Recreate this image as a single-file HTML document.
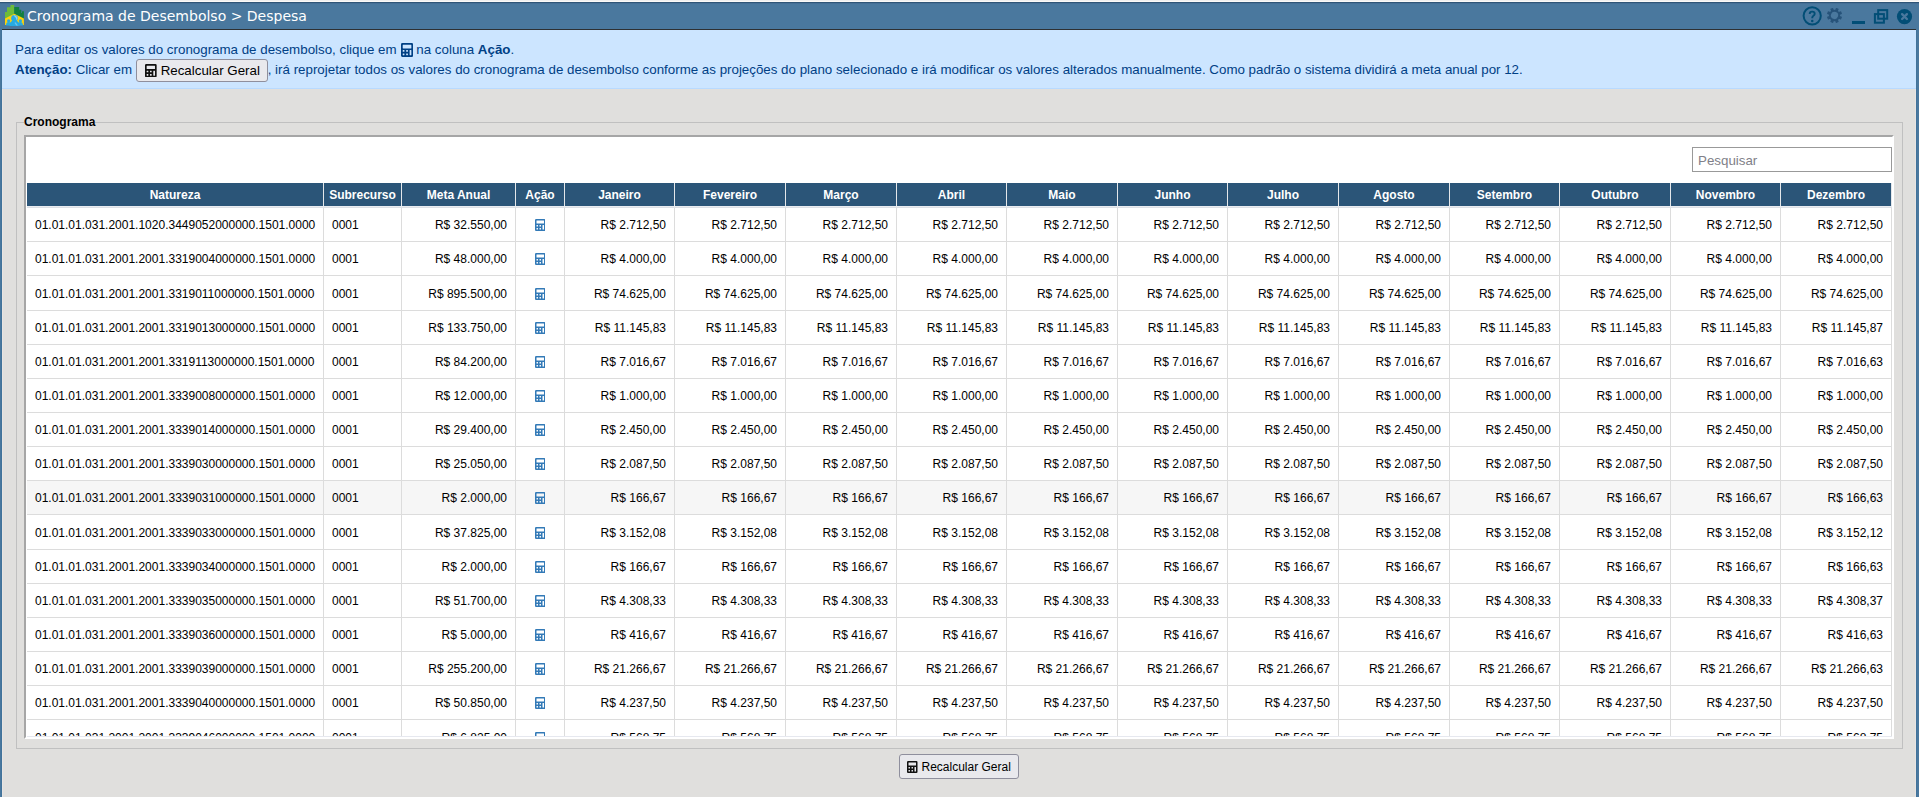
<!DOCTYPE html>
<html lang="pt-BR">
<head>
<meta charset="utf-8">
<title>Cronograma de Desembolso &gt; Despesa</title>
<style>
html,body{margin:0;padding:0;}
body{width:1919px;height:797px;overflow:hidden;position:relative;background:#e0dfdd;font-family:"Liberation Sans",Arial,sans-serif;font-size:12px;color:#000;}
#topstrip{position:absolute;left:0;top:0;width:1919px;height:2px;background:#efefef;border-bottom:1px solid #fbf9f7;box-sizing:border-box;}
#titlebar{position:absolute;left:0;top:2px;width:1919px;height:28px;background:#4a789e;box-sizing:border-box;border-top:1px solid #2f5577;box-shadow:inset 0 1px 0 #456f96;}
#titleline{position:absolute;left:2px;top:29px;width:1914px;height:1px;background:#2e3032;}
#bl{position:absolute;left:0;top:30px;width:2px;height:767px;background:linear-gradient(90deg,#4a789e 50%,#41739b 50%);}
#br{position:absolute;left:1916px;top:30px;width:3px;height:767px;background:linear-gradient(90deg,#41739b 33.3%,#4a789e 33.3%);}
#bl2{position:absolute;left:2px;top:89px;width:1px;height:708px;background:#e8e4e2;}
#br2{position:absolute;left:1915px;top:89px;width:1px;height:708px;background:#e8e4e2;}
#title{position:absolute;left:27px;top:6px;font-family:"DejaVu Sans",Verdana,sans-serif;font-size:14px;color:#fff;white-space:nowrap;line-height:20px;}
#logo{position:absolute;left:4px;top:4px;width:21px;height:23px;}
.tbi{position:absolute;}
#info{position:absolute;left:2px;top:30px;width:1914px;height:59px;box-sizing:border-box;background:#cce5ff;border:1px solid #b8daff;border-left:0;border-right:0;border-top-color:#cce5ff;color:#004085;font-size:13.333px;}
#info .l1{position:absolute;left:13px;top:10px;white-space:nowrap;line-height:18px;}
#info .l2{position:absolute;left:13px;top:30px;white-space:nowrap;line-height:18px;}
.ci2{width:12.1px;height:14px;vertical-align:-2.5px;margin:0 0 0 0.3px;}
.btn{display:inline-block;box-sizing:border-box;background:#e9e9ed;border:1px solid #8f8f9d;border-radius:3px;color:#000;font-size:13.333px;font-family:"Liberation Sans",Arial,sans-serif;white-space:nowrap;}
.ci3{width:11.67px;height:13.33px;vertical-align:-2px;margin-right:3px;}
#ibtn{position:absolute;left:134px;top:28px;width:132px;height:23px;line-height:21px;padding-left:8px;}
#ibtn .ci3{margin-right:4px;}
#fs{position:absolute;left:16px;top:122px;width:1887px;height:627px;box-sizing:border-box;border:1px solid #c0c0c0;}
#legend{position:absolute;left:24px;top:115px;font-weight:bold;font-size:12px;line-height:14px;background:#e0dfdd;white-space:nowrap;}
#box{position:absolute;left:24px;top:135px;width:1870px;height:604px;box-sizing:border-box;background:#fff;border-style:solid;border-width:2px;border-color:#a6a6a6 #fff #fff #a6a6a6;overflow:hidden;}
#search{position:absolute;left:1692px;top:147px;width:200px;height:25px;box-sizing:border-box;border:1px solid #999;background:#fff;font-size:13.333px;color:#808088;line-height:23px;padding-left:5px;padding-top:1px;}
#grid{position:absolute;left:27px;top:183px;width:1865px;height:553px;overflow:hidden;}
.hr{position:absolute;left:0;top:0;width:1865px;height:23px;background:#2b5578;color:#fff;font-weight:bold;display:flex;}
.hr .c{box-sizing:border-box;height:23px;line-height:23px;padding-top:1px;text-align:center;border-right:1px solid #e4e7ea;white-space:nowrap;overflow:hidden;}
#hline{position:absolute;left:0;top:23px;width:1865px;height:1px;background:#e9ecf1;border-bottom:1px solid #dde0e5;z-index:2;}
.r{position:absolute;left:0;width:1865px;display:flex;box-sizing:border-box;border-bottom:1px solid #dcdcdc;background:#fff;}
.r.hov{background:#f6f6f6;}
.r .c{box-sizing:border-box;height:100%;border-right:1px solid #dcdcdc;white-space:nowrap;overflow:hidden;display:flex;align-items:center;padding:1px 8px 0 8px;}
.c1{width:297px;}
.c2{width:78px;}
.c3{width:114px;}
.c4{width:49px;}
.r .c3,.r .cm{justify-content:flex-end;}
.r .c4{justify-content:center;padding:0;}
.cm{width:111px;}
.cm:nth-child(5),.cm:nth-child(8),.cm:nth-child(10),.cm:nth-child(13),.cm:nth-child(15){width:110px;}
.ci{width:10.5px;height:12px;display:block;margin-top:1px;}
#bbtn{position:absolute;left:899px;top:754px;width:120px;height:25px;line-height:23px;padding-left:7.4px;padding-top:1px;font-size:12px;}
#bbtn .ci3{width:10.5px;height:12px;vertical-align:-2px;margin-right:3.6px;}
#gline{position:absolute;left:27px;top:736px;width:1865px;height:1px;background:#e6e8ef;}
</style>
</head>
<body>
<div id="topstrip"></div>
<div id="titlebar"></div>
<div id="bl"></div><div id="br"></div><div id="bl2"></div><div id="br2"></div>
<div id="titleline"></div>
<svg id="logo" viewBox="0 0 21 23">
<polygon fill="#6dbb3a" points="1,8 3,8 3,3.200 6.500,3.200 6.500,1 10.200,1 10.200,11 1,15.500" />
<polygon fill="#128040" points="10.200,3 15.200,3 15.200,5.800 17.300,5.800 17.300,9 18,9 18,7.200 19.900,7.200 19.900,15.500 10.200,11" />
<polygon fill="#fdd20a" points="1,14.600 10.300,9.800 19.900,14.600 19.900,21 1,21" />
<circle cx="10.500" cy="14.200" r="3.300" fill="#27aae1"/>
<path fill="#27aae1" d="M5.500 22c0-4 2-5.500 5-5.500s5 1.500 5 5.500z"/>
<circle cx="4.600" cy="16.800" r="1.600" fill="#27aae1"/><path fill="#27aae1" d="M2 21.500c0-2.500 1-3.500 2.600-3.500s2.600 1 2.600 3.500z"/>
<circle cx="16.400" cy="16.800" r="1.600" fill="#27aae1"/><path fill="#27aae1" d="M13.800 21.500c0-2.500 1-3.500 2.600-3.500s2.600 1 2.600 3.500z"/>
<path fill="#8fd3f2" d="M10.200 11.200c2 0.200 3.500 1.600 3.300 3.800l-1 1.300c-0.200-2.200-1.300-3.800-3-4.600z"/>
<path fill="#6cc5ee" d="M11.500 18.200l2.500 3.300h-1.800l-1.700-2.800z"/>
</svg>
<div id="title">Cronograma de Desembolso &gt; Despesa</div>

<!-- window icons -->
<svg class="tbi" style="left:1802px;top:6px;width:21px;height:21px" viewBox="0 0 21 21">
<circle cx="10.200" cy="9.850" r="8.600" fill="none" stroke="#024e76" stroke-width="2"/>
<path d="M7.700 7.900c0-1.500 1.100-2.300 2.500-2.300 1.500 0 2.500 0.800 2.500 2.100 0 1-0.500 1.500-1.300 2.100-0.700 0.500-1.100 0.900-1.100 1.700v0.700" fill="none" stroke="#024e76" stroke-width="1.900"/>
<circle cx="10.250" cy="14.900" r="1.250" fill="#024e76"/>
</svg>
<svg class="tbi" style="left:1826px;top:7px;width:17px;height:17px" viewBox="0 0 17 17">
<g transform="translate(8.500 8.450) rotate(22.500)" fill="#27537a">
<rect x="-1.500" y="-7.600" width="3" height="15.200" rx="0.400"/><rect x="-1.500" y="-7.600" width="3" height="15.200" rx="0.400" transform="rotate(45)"/><rect x="-1.500" y="-7.600" width="3" height="15.200" rx="0.400" transform="rotate(90)"/><rect x="-1.500" y="-7.600" width="3" height="15.200" rx="0.400" transform="rotate(135)"/>
<circle r="5.700"/>
<circle r="3.600" fill="#4a789e"/>
</g>
</svg>
<div class="tbi" style="left:1852px;top:21px;width:13px;height:3px;background:#024e76"></div>
<svg class="tbi" style="left:1873px;top:8px;width:16px;height:17px" viewBox="0 0 16 17">
<rect x="5.200" y="2.100" width="9" height="8.600" fill="none" stroke="#024e76" stroke-width="2"/>
<rect x="1.900" y="6.100" width="9" height="8.600" fill="none" stroke="#024e76" stroke-width="2"/>
</svg>
<svg class="tbi" style="left:1896px;top:8px;width:17px;height:17px" viewBox="0 0 17 17">
<circle cx="8.500" cy="8.600" r="7.600" fill="#024e76"/>
<path d="M6.100 6.200l4.800 4.800M10.900 6.200l-4.800 4.800" stroke="#4a789e" stroke-width="2.400" stroke-linecap="round"/>
</svg>

<div id="info">
<div class="l1">Para editar os valores do cronograma de desembolso, clique em <svg class="ci2" viewBox="0 0 448 512"><path fill="#004085" fill-rule="evenodd" d="M48 0h352a48 48 0 0 1 48 48v416a48 48 0 0 1-48 48H48a48 48 0 0 1-48-48V48A48 48 0 0 1 48 0zM76 64a12 12 0 0 0-12 12v108a12 12 0 0 0 12 12h296a12 12 0 0 0 12-12v-108a12 12 0 0 0-12-12zM76 256a12 12 0 0 0-12 12v40a12 12 0 0 0 12 12h40a12 12 0 0 0 12-12v-40a12 12 0 0 0-12-12zM76 384a12 12 0 0 0-12 12v40a12 12 0 0 0 12 12h40a12 12 0 0 0 12-12v-40a12 12 0 0 0-12-12zM204 256a12 12 0 0 0-12 12v40a12 12 0 0 0 12 12h40a12 12 0 0 0 12-12v-40a12 12 0 0 0-12-12zM204 384a12 12 0 0 0-12 12v40a12 12 0 0 0 12 12h40a12 12 0 0 0 12-12v-40a12 12 0 0 0-12-12zM332 256a12 12 0 0 0-12 12v168a12 12 0 0 0 12 12h40a12 12 0 0 0 12-12v-168a12 12 0 0 0-12-12z"/></svg> na coluna <b>Ação</b>.</div>
<div class="l2"><b>Atenção:</b> Clicar em <span style="display:inline-block;width:132px"></span>, irá reprojetar todos os valores do cronograma de desembolso conforme as projeções do plano selecionado e irá modificar os valores alterados manualmente. Como padrão o sistema dividirá a meta anual por 12.</div>
<div class="btn" id="ibtn"><svg class="ci3" viewBox="0 0 448 512"><path fill="#111" fill-rule="evenodd" d="M48 0h352a48 48 0 0 1 48 48v416a48 48 0 0 1-48 48H48a48 48 0 0 1-48-48V48A48 48 0 0 1 48 0zM76 64a12 12 0 0 0-12 12v108a12 12 0 0 0 12 12h296a12 12 0 0 0 12-12v-108a12 12 0 0 0-12-12zM76 256a12 12 0 0 0-12 12v40a12 12 0 0 0 12 12h40a12 12 0 0 0 12-12v-40a12 12 0 0 0-12-12zM76 384a12 12 0 0 0-12 12v40a12 12 0 0 0 12 12h40a12 12 0 0 0 12-12v-40a12 12 0 0 0-12-12zM204 256a12 12 0 0 0-12 12v40a12 12 0 0 0 12 12h40a12 12 0 0 0 12-12v-40a12 12 0 0 0-12-12zM204 384a12 12 0 0 0-12 12v40a12 12 0 0 0 12 12h40a12 12 0 0 0 12-12v-40a12 12 0 0 0-12-12zM332 256a12 12 0 0 0-12 12v168a12 12 0 0 0 12 12h40a12 12 0 0 0 12-12v-168a12 12 0 0 0-12-12z"/></svg>Recalcular Geral</div>
</div>

<div id="fs"></div>
<div id="legend">Cronograma</div>
<div id="box"></div>
<div id="search">Pesquisar</div>
<div id="grid">
<div class="hr"><div class="c c1">Natureza</div><div class="c c2">Subrecurso</div><div class="c c3">Meta Anual</div><div class="c c4">Ação</div><div class="c cm">Janeiro</div><div class="c cm">Fevereiro</div><div class="c cm">Março</div><div class="c cm">Abril</div><div class="c cm">Maio</div><div class="c cm">Junho</div><div class="c cm">Julho</div><div class="c cm">Agosto</div><div class="c cm">Setembro</div><div class="c cm">Outubro</div><div class="c cm">Novembro</div><div class="c cm">Dezembro</div></div>
<div id="hline"></div>
<div class="r" style="top:24px;height:35px"><div class="c c1">01.01.01.031.2001.1020.3449052000000.1501.0000</div><div class="c c2">0001</div><div class="c c3">R$ 32.550,00</div><div class="c c4"><svg class="ci" viewBox="0 0 448 512"><path fill="#337ab7" fill-rule="evenodd" d="M48 0h352a48 48 0 0 1 48 48v416a48 48 0 0 1-48 48H48a48 48 0 0 1-48-48V48A48 48 0 0 1 48 0zM76 64a12 12 0 0 0-12 12v108a12 12 0 0 0 12 12h296a12 12 0 0 0 12-12v-108a12 12 0 0 0-12-12zM76 256a12 12 0 0 0-12 12v40a12 12 0 0 0 12 12h40a12 12 0 0 0 12-12v-40a12 12 0 0 0-12-12zM76 384a12 12 0 0 0-12 12v40a12 12 0 0 0 12 12h40a12 12 0 0 0 12-12v-40a12 12 0 0 0-12-12zM204 256a12 12 0 0 0-12 12v40a12 12 0 0 0 12 12h40a12 12 0 0 0 12-12v-40a12 12 0 0 0-12-12zM204 384a12 12 0 0 0-12 12v40a12 12 0 0 0 12 12h40a12 12 0 0 0 12-12v-40a12 12 0 0 0-12-12zM332 256a12 12 0 0 0-12 12v168a12 12 0 0 0 12 12h40a12 12 0 0 0 12-12v-168a12 12 0 0 0-12-12z"/></svg></div><div class="c cm">R$ 2.712,50</div><div class="c cm">R$ 2.712,50</div><div class="c cm">R$ 2.712,50</div><div class="c cm">R$ 2.712,50</div><div class="c cm">R$ 2.712,50</div><div class="c cm">R$ 2.712,50</div><div class="c cm">R$ 2.712,50</div><div class="c cm">R$ 2.712,50</div><div class="c cm">R$ 2.712,50</div><div class="c cm">R$ 2.712,50</div><div class="c cm">R$ 2.712,50</div><div class="c cm">R$ 2.712,50</div></div>
<div class="r" style="top:59px;height:34px"><div class="c c1">01.01.01.031.2001.2001.3319004000000.1501.0000</div><div class="c c2">0001</div><div class="c c3">R$ 48.000,00</div><div class="c c4"><svg class="ci" viewBox="0 0 448 512"><path fill="#337ab7" fill-rule="evenodd" d="M48 0h352a48 48 0 0 1 48 48v416a48 48 0 0 1-48 48H48a48 48 0 0 1-48-48V48A48 48 0 0 1 48 0zM76 64a12 12 0 0 0-12 12v108a12 12 0 0 0 12 12h296a12 12 0 0 0 12-12v-108a12 12 0 0 0-12-12zM76 256a12 12 0 0 0-12 12v40a12 12 0 0 0 12 12h40a12 12 0 0 0 12-12v-40a12 12 0 0 0-12-12zM76 384a12 12 0 0 0-12 12v40a12 12 0 0 0 12 12h40a12 12 0 0 0 12-12v-40a12 12 0 0 0-12-12zM204 256a12 12 0 0 0-12 12v40a12 12 0 0 0 12 12h40a12 12 0 0 0 12-12v-40a12 12 0 0 0-12-12zM204 384a12 12 0 0 0-12 12v40a12 12 0 0 0 12 12h40a12 12 0 0 0 12-12v-40a12 12 0 0 0-12-12zM332 256a12 12 0 0 0-12 12v168a12 12 0 0 0 12 12h40a12 12 0 0 0 12-12v-168a12 12 0 0 0-12-12z"/></svg></div><div class="c cm">R$ 4.000,00</div><div class="c cm">R$ 4.000,00</div><div class="c cm">R$ 4.000,00</div><div class="c cm">R$ 4.000,00</div><div class="c cm">R$ 4.000,00</div><div class="c cm">R$ 4.000,00</div><div class="c cm">R$ 4.000,00</div><div class="c cm">R$ 4.000,00</div><div class="c cm">R$ 4.000,00</div><div class="c cm">R$ 4.000,00</div><div class="c cm">R$ 4.000,00</div><div class="c cm">R$ 4.000,00</div></div>
<div class="r" style="top:93px;height:35px"><div class="c c1">01.01.01.031.2001.2001.3319011000000.1501.0000</div><div class="c c2">0001</div><div class="c c3">R$ 895.500,00</div><div class="c c4"><svg class="ci" viewBox="0 0 448 512"><path fill="#337ab7" fill-rule="evenodd" d="M48 0h352a48 48 0 0 1 48 48v416a48 48 0 0 1-48 48H48a48 48 0 0 1-48-48V48A48 48 0 0 1 48 0zM76 64a12 12 0 0 0-12 12v108a12 12 0 0 0 12 12h296a12 12 0 0 0 12-12v-108a12 12 0 0 0-12-12zM76 256a12 12 0 0 0-12 12v40a12 12 0 0 0 12 12h40a12 12 0 0 0 12-12v-40a12 12 0 0 0-12-12zM76 384a12 12 0 0 0-12 12v40a12 12 0 0 0 12 12h40a12 12 0 0 0 12-12v-40a12 12 0 0 0-12-12zM204 256a12 12 0 0 0-12 12v40a12 12 0 0 0 12 12h40a12 12 0 0 0 12-12v-40a12 12 0 0 0-12-12zM204 384a12 12 0 0 0-12 12v40a12 12 0 0 0 12 12h40a12 12 0 0 0 12-12v-40a12 12 0 0 0-12-12zM332 256a12 12 0 0 0-12 12v168a12 12 0 0 0 12 12h40a12 12 0 0 0 12-12v-168a12 12 0 0 0-12-12z"/></svg></div><div class="c cm">R$ 74.625,00</div><div class="c cm">R$ 74.625,00</div><div class="c cm">R$ 74.625,00</div><div class="c cm">R$ 74.625,00</div><div class="c cm">R$ 74.625,00</div><div class="c cm">R$ 74.625,00</div><div class="c cm">R$ 74.625,00</div><div class="c cm">R$ 74.625,00</div><div class="c cm">R$ 74.625,00</div><div class="c cm">R$ 74.625,00</div><div class="c cm">R$ 74.625,00</div><div class="c cm">R$ 74.625,00</div></div>
<div class="r" style="top:128px;height:34px"><div class="c c1">01.01.01.031.2001.2001.3319013000000.1501.0000</div><div class="c c2">0001</div><div class="c c3">R$ 133.750,00</div><div class="c c4"><svg class="ci" viewBox="0 0 448 512"><path fill="#337ab7" fill-rule="evenodd" d="M48 0h352a48 48 0 0 1 48 48v416a48 48 0 0 1-48 48H48a48 48 0 0 1-48-48V48A48 48 0 0 1 48 0zM76 64a12 12 0 0 0-12 12v108a12 12 0 0 0 12 12h296a12 12 0 0 0 12-12v-108a12 12 0 0 0-12-12zM76 256a12 12 0 0 0-12 12v40a12 12 0 0 0 12 12h40a12 12 0 0 0 12-12v-40a12 12 0 0 0-12-12zM76 384a12 12 0 0 0-12 12v40a12 12 0 0 0 12 12h40a12 12 0 0 0 12-12v-40a12 12 0 0 0-12-12zM204 256a12 12 0 0 0-12 12v40a12 12 0 0 0 12 12h40a12 12 0 0 0 12-12v-40a12 12 0 0 0-12-12zM204 384a12 12 0 0 0-12 12v40a12 12 0 0 0 12 12h40a12 12 0 0 0 12-12v-40a12 12 0 0 0-12-12zM332 256a12 12 0 0 0-12 12v168a12 12 0 0 0 12 12h40a12 12 0 0 0 12-12v-168a12 12 0 0 0-12-12z"/></svg></div><div class="c cm">R$ 11.145,83</div><div class="c cm">R$ 11.145,83</div><div class="c cm">R$ 11.145,83</div><div class="c cm">R$ 11.145,83</div><div class="c cm">R$ 11.145,83</div><div class="c cm">R$ 11.145,83</div><div class="c cm">R$ 11.145,83</div><div class="c cm">R$ 11.145,83</div><div class="c cm">R$ 11.145,83</div><div class="c cm">R$ 11.145,83</div><div class="c cm">R$ 11.145,83</div><div class="c cm">R$ 11.145,87</div></div>
<div class="r" style="top:162px;height:34px"><div class="c c1">01.01.01.031.2001.2001.3319113000000.1501.0000</div><div class="c c2">0001</div><div class="c c3">R$ 84.200,00</div><div class="c c4"><svg class="ci" viewBox="0 0 448 512"><path fill="#337ab7" fill-rule="evenodd" d="M48 0h352a48 48 0 0 1 48 48v416a48 48 0 0 1-48 48H48a48 48 0 0 1-48-48V48A48 48 0 0 1 48 0zM76 64a12 12 0 0 0-12 12v108a12 12 0 0 0 12 12h296a12 12 0 0 0 12-12v-108a12 12 0 0 0-12-12zM76 256a12 12 0 0 0-12 12v40a12 12 0 0 0 12 12h40a12 12 0 0 0 12-12v-40a12 12 0 0 0-12-12zM76 384a12 12 0 0 0-12 12v40a12 12 0 0 0 12 12h40a12 12 0 0 0 12-12v-40a12 12 0 0 0-12-12zM204 256a12 12 0 0 0-12 12v40a12 12 0 0 0 12 12h40a12 12 0 0 0 12-12v-40a12 12 0 0 0-12-12zM204 384a12 12 0 0 0-12 12v40a12 12 0 0 0 12 12h40a12 12 0 0 0 12-12v-40a12 12 0 0 0-12-12zM332 256a12 12 0 0 0-12 12v168a12 12 0 0 0 12 12h40a12 12 0 0 0 12-12v-168a12 12 0 0 0-12-12z"/></svg></div><div class="c cm">R$ 7.016,67</div><div class="c cm">R$ 7.016,67</div><div class="c cm">R$ 7.016,67</div><div class="c cm">R$ 7.016,67</div><div class="c cm">R$ 7.016,67</div><div class="c cm">R$ 7.016,67</div><div class="c cm">R$ 7.016,67</div><div class="c cm">R$ 7.016,67</div><div class="c cm">R$ 7.016,67</div><div class="c cm">R$ 7.016,67</div><div class="c cm">R$ 7.016,67</div><div class="c cm">R$ 7.016,63</div></div>
<div class="r" style="top:196px;height:34px"><div class="c c1">01.01.01.031.2001.2001.3339008000000.1501.0000</div><div class="c c2">0001</div><div class="c c3">R$ 12.000,00</div><div class="c c4"><svg class="ci" viewBox="0 0 448 512"><path fill="#337ab7" fill-rule="evenodd" d="M48 0h352a48 48 0 0 1 48 48v416a48 48 0 0 1-48 48H48a48 48 0 0 1-48-48V48A48 48 0 0 1 48 0zM76 64a12 12 0 0 0-12 12v108a12 12 0 0 0 12 12h296a12 12 0 0 0 12-12v-108a12 12 0 0 0-12-12zM76 256a12 12 0 0 0-12 12v40a12 12 0 0 0 12 12h40a12 12 0 0 0 12-12v-40a12 12 0 0 0-12-12zM76 384a12 12 0 0 0-12 12v40a12 12 0 0 0 12 12h40a12 12 0 0 0 12-12v-40a12 12 0 0 0-12-12zM204 256a12 12 0 0 0-12 12v40a12 12 0 0 0 12 12h40a12 12 0 0 0 12-12v-40a12 12 0 0 0-12-12zM204 384a12 12 0 0 0-12 12v40a12 12 0 0 0 12 12h40a12 12 0 0 0 12-12v-40a12 12 0 0 0-12-12zM332 256a12 12 0 0 0-12 12v168a12 12 0 0 0 12 12h40a12 12 0 0 0 12-12v-168a12 12 0 0 0-12-12z"/></svg></div><div class="c cm">R$ 1.000,00</div><div class="c cm">R$ 1.000,00</div><div class="c cm">R$ 1.000,00</div><div class="c cm">R$ 1.000,00</div><div class="c cm">R$ 1.000,00</div><div class="c cm">R$ 1.000,00</div><div class="c cm">R$ 1.000,00</div><div class="c cm">R$ 1.000,00</div><div class="c cm">R$ 1.000,00</div><div class="c cm">R$ 1.000,00</div><div class="c cm">R$ 1.000,00</div><div class="c cm">R$ 1.000,00</div></div>
<div class="r" style="top:230px;height:34px"><div class="c c1">01.01.01.031.2001.2001.3339014000000.1501.0000</div><div class="c c2">0001</div><div class="c c3">R$ 29.400,00</div><div class="c c4"><svg class="ci" viewBox="0 0 448 512"><path fill="#337ab7" fill-rule="evenodd" d="M48 0h352a48 48 0 0 1 48 48v416a48 48 0 0 1-48 48H48a48 48 0 0 1-48-48V48A48 48 0 0 1 48 0zM76 64a12 12 0 0 0-12 12v108a12 12 0 0 0 12 12h296a12 12 0 0 0 12-12v-108a12 12 0 0 0-12-12zM76 256a12 12 0 0 0-12 12v40a12 12 0 0 0 12 12h40a12 12 0 0 0 12-12v-40a12 12 0 0 0-12-12zM76 384a12 12 0 0 0-12 12v40a12 12 0 0 0 12 12h40a12 12 0 0 0 12-12v-40a12 12 0 0 0-12-12zM204 256a12 12 0 0 0-12 12v40a12 12 0 0 0 12 12h40a12 12 0 0 0 12-12v-40a12 12 0 0 0-12-12zM204 384a12 12 0 0 0-12 12v40a12 12 0 0 0 12 12h40a12 12 0 0 0 12-12v-40a12 12 0 0 0-12-12zM332 256a12 12 0 0 0-12 12v168a12 12 0 0 0 12 12h40a12 12 0 0 0 12-12v-168a12 12 0 0 0-12-12z"/></svg></div><div class="c cm">R$ 2.450,00</div><div class="c cm">R$ 2.450,00</div><div class="c cm">R$ 2.450,00</div><div class="c cm">R$ 2.450,00</div><div class="c cm">R$ 2.450,00</div><div class="c cm">R$ 2.450,00</div><div class="c cm">R$ 2.450,00</div><div class="c cm">R$ 2.450,00</div><div class="c cm">R$ 2.450,00</div><div class="c cm">R$ 2.450,00</div><div class="c cm">R$ 2.450,00</div><div class="c cm">R$ 2.450,00</div></div>
<div class="r" style="top:264px;height:34px"><div class="c c1">01.01.01.031.2001.2001.3339030000000.1501.0000</div><div class="c c2">0001</div><div class="c c3">R$ 25.050,00</div><div class="c c4"><svg class="ci" viewBox="0 0 448 512"><path fill="#337ab7" fill-rule="evenodd" d="M48 0h352a48 48 0 0 1 48 48v416a48 48 0 0 1-48 48H48a48 48 0 0 1-48-48V48A48 48 0 0 1 48 0zM76 64a12 12 0 0 0-12 12v108a12 12 0 0 0 12 12h296a12 12 0 0 0 12-12v-108a12 12 0 0 0-12-12zM76 256a12 12 0 0 0-12 12v40a12 12 0 0 0 12 12h40a12 12 0 0 0 12-12v-40a12 12 0 0 0-12-12zM76 384a12 12 0 0 0-12 12v40a12 12 0 0 0 12 12h40a12 12 0 0 0 12-12v-40a12 12 0 0 0-12-12zM204 256a12 12 0 0 0-12 12v40a12 12 0 0 0 12 12h40a12 12 0 0 0 12-12v-40a12 12 0 0 0-12-12zM204 384a12 12 0 0 0-12 12v40a12 12 0 0 0 12 12h40a12 12 0 0 0 12-12v-40a12 12 0 0 0-12-12zM332 256a12 12 0 0 0-12 12v168a12 12 0 0 0 12 12h40a12 12 0 0 0 12-12v-168a12 12 0 0 0-12-12z"/></svg></div><div class="c cm">R$ 2.087,50</div><div class="c cm">R$ 2.087,50</div><div class="c cm">R$ 2.087,50</div><div class="c cm">R$ 2.087,50</div><div class="c cm">R$ 2.087,50</div><div class="c cm">R$ 2.087,50</div><div class="c cm">R$ 2.087,50</div><div class="c cm">R$ 2.087,50</div><div class="c cm">R$ 2.087,50</div><div class="c cm">R$ 2.087,50</div><div class="c cm">R$ 2.087,50</div><div class="c cm">R$ 2.087,50</div></div>
<div class="r hov" style="top:298px;height:34px"><div class="c c1">01.01.01.031.2001.2001.3339031000000.1501.0000</div><div class="c c2">0001</div><div class="c c3">R$ 2.000,00</div><div class="c c4"><svg class="ci" viewBox="0 0 448 512"><path fill="#337ab7" fill-rule="evenodd" d="M48 0h352a48 48 0 0 1 48 48v416a48 48 0 0 1-48 48H48a48 48 0 0 1-48-48V48A48 48 0 0 1 48 0zM76 64a12 12 0 0 0-12 12v108a12 12 0 0 0 12 12h296a12 12 0 0 0 12-12v-108a12 12 0 0 0-12-12zM76 256a12 12 0 0 0-12 12v40a12 12 0 0 0 12 12h40a12 12 0 0 0 12-12v-40a12 12 0 0 0-12-12zM76 384a12 12 0 0 0-12 12v40a12 12 0 0 0 12 12h40a12 12 0 0 0 12-12v-40a12 12 0 0 0-12-12zM204 256a12 12 0 0 0-12 12v40a12 12 0 0 0 12 12h40a12 12 0 0 0 12-12v-40a12 12 0 0 0-12-12zM204 384a12 12 0 0 0-12 12v40a12 12 0 0 0 12 12h40a12 12 0 0 0 12-12v-40a12 12 0 0 0-12-12zM332 256a12 12 0 0 0-12 12v168a12 12 0 0 0 12 12h40a12 12 0 0 0 12-12v-168a12 12 0 0 0-12-12z"/></svg></div><div class="c cm">R$ 166,67</div><div class="c cm">R$ 166,67</div><div class="c cm">R$ 166,67</div><div class="c cm">R$ 166,67</div><div class="c cm">R$ 166,67</div><div class="c cm">R$ 166,67</div><div class="c cm">R$ 166,67</div><div class="c cm">R$ 166,67</div><div class="c cm">R$ 166,67</div><div class="c cm">R$ 166,67</div><div class="c cm">R$ 166,67</div><div class="c cm">R$ 166,63</div></div>
<div class="r" style="top:332px;height:35px"><div class="c c1">01.01.01.031.2001.2001.3339033000000.1501.0000</div><div class="c c2">0001</div><div class="c c3">R$ 37.825,00</div><div class="c c4"><svg class="ci" viewBox="0 0 448 512"><path fill="#337ab7" fill-rule="evenodd" d="M48 0h352a48 48 0 0 1 48 48v416a48 48 0 0 1-48 48H48a48 48 0 0 1-48-48V48A48 48 0 0 1 48 0zM76 64a12 12 0 0 0-12 12v108a12 12 0 0 0 12 12h296a12 12 0 0 0 12-12v-108a12 12 0 0 0-12-12zM76 256a12 12 0 0 0-12 12v40a12 12 0 0 0 12 12h40a12 12 0 0 0 12-12v-40a12 12 0 0 0-12-12zM76 384a12 12 0 0 0-12 12v40a12 12 0 0 0 12 12h40a12 12 0 0 0 12-12v-40a12 12 0 0 0-12-12zM204 256a12 12 0 0 0-12 12v40a12 12 0 0 0 12 12h40a12 12 0 0 0 12-12v-40a12 12 0 0 0-12-12zM204 384a12 12 0 0 0-12 12v40a12 12 0 0 0 12 12h40a12 12 0 0 0 12-12v-40a12 12 0 0 0-12-12zM332 256a12 12 0 0 0-12 12v168a12 12 0 0 0 12 12h40a12 12 0 0 0 12-12v-168a12 12 0 0 0-12-12z"/></svg></div><div class="c cm">R$ 3.152,08</div><div class="c cm">R$ 3.152,08</div><div class="c cm">R$ 3.152,08</div><div class="c cm">R$ 3.152,08</div><div class="c cm">R$ 3.152,08</div><div class="c cm">R$ 3.152,08</div><div class="c cm">R$ 3.152,08</div><div class="c cm">R$ 3.152,08</div><div class="c cm">R$ 3.152,08</div><div class="c cm">R$ 3.152,08</div><div class="c cm">R$ 3.152,08</div><div class="c cm">R$ 3.152,12</div></div>
<div class="r" style="top:367px;height:34px"><div class="c c1">01.01.01.031.2001.2001.3339034000000.1501.0000</div><div class="c c2">0001</div><div class="c c3">R$ 2.000,00</div><div class="c c4"><svg class="ci" viewBox="0 0 448 512"><path fill="#337ab7" fill-rule="evenodd" d="M48 0h352a48 48 0 0 1 48 48v416a48 48 0 0 1-48 48H48a48 48 0 0 1-48-48V48A48 48 0 0 1 48 0zM76 64a12 12 0 0 0-12 12v108a12 12 0 0 0 12 12h296a12 12 0 0 0 12-12v-108a12 12 0 0 0-12-12zM76 256a12 12 0 0 0-12 12v40a12 12 0 0 0 12 12h40a12 12 0 0 0 12-12v-40a12 12 0 0 0-12-12zM76 384a12 12 0 0 0-12 12v40a12 12 0 0 0 12 12h40a12 12 0 0 0 12-12v-40a12 12 0 0 0-12-12zM204 256a12 12 0 0 0-12 12v40a12 12 0 0 0 12 12h40a12 12 0 0 0 12-12v-40a12 12 0 0 0-12-12zM204 384a12 12 0 0 0-12 12v40a12 12 0 0 0 12 12h40a12 12 0 0 0 12-12v-40a12 12 0 0 0-12-12zM332 256a12 12 0 0 0-12 12v168a12 12 0 0 0 12 12h40a12 12 0 0 0 12-12v-168a12 12 0 0 0-12-12z"/></svg></div><div class="c cm">R$ 166,67</div><div class="c cm">R$ 166,67</div><div class="c cm">R$ 166,67</div><div class="c cm">R$ 166,67</div><div class="c cm">R$ 166,67</div><div class="c cm">R$ 166,67</div><div class="c cm">R$ 166,67</div><div class="c cm">R$ 166,67</div><div class="c cm">R$ 166,67</div><div class="c cm">R$ 166,67</div><div class="c cm">R$ 166,67</div><div class="c cm">R$ 166,63</div></div>
<div class="r" style="top:401px;height:34px"><div class="c c1">01.01.01.031.2001.2001.3339035000000.1501.0000</div><div class="c c2">0001</div><div class="c c3">R$ 51.700,00</div><div class="c c4"><svg class="ci" viewBox="0 0 448 512"><path fill="#337ab7" fill-rule="evenodd" d="M48 0h352a48 48 0 0 1 48 48v416a48 48 0 0 1-48 48H48a48 48 0 0 1-48-48V48A48 48 0 0 1 48 0zM76 64a12 12 0 0 0-12 12v108a12 12 0 0 0 12 12h296a12 12 0 0 0 12-12v-108a12 12 0 0 0-12-12zM76 256a12 12 0 0 0-12 12v40a12 12 0 0 0 12 12h40a12 12 0 0 0 12-12v-40a12 12 0 0 0-12-12zM76 384a12 12 0 0 0-12 12v40a12 12 0 0 0 12 12h40a12 12 0 0 0 12-12v-40a12 12 0 0 0-12-12zM204 256a12 12 0 0 0-12 12v40a12 12 0 0 0 12 12h40a12 12 0 0 0 12-12v-40a12 12 0 0 0-12-12zM204 384a12 12 0 0 0-12 12v40a12 12 0 0 0 12 12h40a12 12 0 0 0 12-12v-40a12 12 0 0 0-12-12zM332 256a12 12 0 0 0-12 12v168a12 12 0 0 0 12 12h40a12 12 0 0 0 12-12v-168a12 12 0 0 0-12-12z"/></svg></div><div class="c cm">R$ 4.308,33</div><div class="c cm">R$ 4.308,33</div><div class="c cm">R$ 4.308,33</div><div class="c cm">R$ 4.308,33</div><div class="c cm">R$ 4.308,33</div><div class="c cm">R$ 4.308,33</div><div class="c cm">R$ 4.308,33</div><div class="c cm">R$ 4.308,33</div><div class="c cm">R$ 4.308,33</div><div class="c cm">R$ 4.308,33</div><div class="c cm">R$ 4.308,33</div><div class="c cm">R$ 4.308,37</div></div>
<div class="r" style="top:435px;height:34px"><div class="c c1">01.01.01.031.2001.2001.3339036000000.1501.0000</div><div class="c c2">0001</div><div class="c c3">R$ 5.000,00</div><div class="c c4"><svg class="ci" viewBox="0 0 448 512"><path fill="#337ab7" fill-rule="evenodd" d="M48 0h352a48 48 0 0 1 48 48v416a48 48 0 0 1-48 48H48a48 48 0 0 1-48-48V48A48 48 0 0 1 48 0zM76 64a12 12 0 0 0-12 12v108a12 12 0 0 0 12 12h296a12 12 0 0 0 12-12v-108a12 12 0 0 0-12-12zM76 256a12 12 0 0 0-12 12v40a12 12 0 0 0 12 12h40a12 12 0 0 0 12-12v-40a12 12 0 0 0-12-12zM76 384a12 12 0 0 0-12 12v40a12 12 0 0 0 12 12h40a12 12 0 0 0 12-12v-40a12 12 0 0 0-12-12zM204 256a12 12 0 0 0-12 12v40a12 12 0 0 0 12 12h40a12 12 0 0 0 12-12v-40a12 12 0 0 0-12-12zM204 384a12 12 0 0 0-12 12v40a12 12 0 0 0 12 12h40a12 12 0 0 0 12-12v-40a12 12 0 0 0-12-12zM332 256a12 12 0 0 0-12 12v168a12 12 0 0 0 12 12h40a12 12 0 0 0 12-12v-168a12 12 0 0 0-12-12z"/></svg></div><div class="c cm">R$ 416,67</div><div class="c cm">R$ 416,67</div><div class="c cm">R$ 416,67</div><div class="c cm">R$ 416,67</div><div class="c cm">R$ 416,67</div><div class="c cm">R$ 416,67</div><div class="c cm">R$ 416,67</div><div class="c cm">R$ 416,67</div><div class="c cm">R$ 416,67</div><div class="c cm">R$ 416,67</div><div class="c cm">R$ 416,67</div><div class="c cm">R$ 416,63</div></div>
<div class="r" style="top:469px;height:34px"><div class="c c1">01.01.01.031.2001.2001.3339039000000.1501.0000</div><div class="c c2">0001</div><div class="c c3">R$ 255.200,00</div><div class="c c4"><svg class="ci" viewBox="0 0 448 512"><path fill="#337ab7" fill-rule="evenodd" d="M48 0h352a48 48 0 0 1 48 48v416a48 48 0 0 1-48 48H48a48 48 0 0 1-48-48V48A48 48 0 0 1 48 0zM76 64a12 12 0 0 0-12 12v108a12 12 0 0 0 12 12h296a12 12 0 0 0 12-12v-108a12 12 0 0 0-12-12zM76 256a12 12 0 0 0-12 12v40a12 12 0 0 0 12 12h40a12 12 0 0 0 12-12v-40a12 12 0 0 0-12-12zM76 384a12 12 0 0 0-12 12v40a12 12 0 0 0 12 12h40a12 12 0 0 0 12-12v-40a12 12 0 0 0-12-12zM204 256a12 12 0 0 0-12 12v40a12 12 0 0 0 12 12h40a12 12 0 0 0 12-12v-40a12 12 0 0 0-12-12zM204 384a12 12 0 0 0-12 12v40a12 12 0 0 0 12 12h40a12 12 0 0 0 12-12v-40a12 12 0 0 0-12-12zM332 256a12 12 0 0 0-12 12v168a12 12 0 0 0 12 12h40a12 12 0 0 0 12-12v-168a12 12 0 0 0-12-12z"/></svg></div><div class="c cm">R$ 21.266,67</div><div class="c cm">R$ 21.266,67</div><div class="c cm">R$ 21.266,67</div><div class="c cm">R$ 21.266,67</div><div class="c cm">R$ 21.266,67</div><div class="c cm">R$ 21.266,67</div><div class="c cm">R$ 21.266,67</div><div class="c cm">R$ 21.266,67</div><div class="c cm">R$ 21.266,67</div><div class="c cm">R$ 21.266,67</div><div class="c cm">R$ 21.266,67</div><div class="c cm">R$ 21.266,63</div></div>
<div class="r" style="top:503px;height:34px"><div class="c c1">01.01.01.031.2001.2001.3339040000000.1501.0000</div><div class="c c2">0001</div><div class="c c3">R$ 50.850,00</div><div class="c c4"><svg class="ci" viewBox="0 0 448 512"><path fill="#337ab7" fill-rule="evenodd" d="M48 0h352a48 48 0 0 1 48 48v416a48 48 0 0 1-48 48H48a48 48 0 0 1-48-48V48A48 48 0 0 1 48 0zM76 64a12 12 0 0 0-12 12v108a12 12 0 0 0 12 12h296a12 12 0 0 0 12-12v-108a12 12 0 0 0-12-12zM76 256a12 12 0 0 0-12 12v40a12 12 0 0 0 12 12h40a12 12 0 0 0 12-12v-40a12 12 0 0 0-12-12zM76 384a12 12 0 0 0-12 12v40a12 12 0 0 0 12 12h40a12 12 0 0 0 12-12v-40a12 12 0 0 0-12-12zM204 256a12 12 0 0 0-12 12v40a12 12 0 0 0 12 12h40a12 12 0 0 0 12-12v-40a12 12 0 0 0-12-12zM204 384a12 12 0 0 0-12 12v40a12 12 0 0 0 12 12h40a12 12 0 0 0 12-12v-40a12 12 0 0 0-12-12zM332 256a12 12 0 0 0-12 12v168a12 12 0 0 0 12 12h40a12 12 0 0 0 12-12v-168a12 12 0 0 0-12-12z"/></svg></div><div class="c cm">R$ 4.237,50</div><div class="c cm">R$ 4.237,50</div><div class="c cm">R$ 4.237,50</div><div class="c cm">R$ 4.237,50</div><div class="c cm">R$ 4.237,50</div><div class="c cm">R$ 4.237,50</div><div class="c cm">R$ 4.237,50</div><div class="c cm">R$ 4.237,50</div><div class="c cm">R$ 4.237,50</div><div class="c cm">R$ 4.237,50</div><div class="c cm">R$ 4.237,50</div><div class="c cm">R$ 4.237,50</div></div>
<div class="r" style="top:537px;height:35px"><div class="c c1">01.01.01.031.2001.2001.3339046000000.1501.0000</div><div class="c c2">0001</div><div class="c c3">R$ 6.825,00</div><div class="c c4"><svg class="ci" viewBox="0 0 448 512"><path fill="#337ab7" fill-rule="evenodd" d="M48 0h352a48 48 0 0 1 48 48v416a48 48 0 0 1-48 48H48a48 48 0 0 1-48-48V48A48 48 0 0 1 48 0zM76 64a12 12 0 0 0-12 12v108a12 12 0 0 0 12 12h296a12 12 0 0 0 12-12v-108a12 12 0 0 0-12-12zM76 256a12 12 0 0 0-12 12v40a12 12 0 0 0 12 12h40a12 12 0 0 0 12-12v-40a12 12 0 0 0-12-12zM76 384a12 12 0 0 0-12 12v40a12 12 0 0 0 12 12h40a12 12 0 0 0 12-12v-40a12 12 0 0 0-12-12zM204 256a12 12 0 0 0-12 12v40a12 12 0 0 0 12 12h40a12 12 0 0 0 12-12v-40a12 12 0 0 0-12-12zM204 384a12 12 0 0 0-12 12v40a12 12 0 0 0 12 12h40a12 12 0 0 0 12-12v-40a12 12 0 0 0-12-12zM332 256a12 12 0 0 0-12 12v168a12 12 0 0 0 12 12h40a12 12 0 0 0 12-12v-168a12 12 0 0 0-12-12z"/></svg></div><div class="c cm">R$ 568,75</div><div class="c cm">R$ 568,75</div><div class="c cm">R$ 568,75</div><div class="c cm">R$ 568,75</div><div class="c cm">R$ 568,75</div><div class="c cm">R$ 568,75</div><div class="c cm">R$ 568,75</div><div class="c cm">R$ 568,75</div><div class="c cm">R$ 568,75</div><div class="c cm">R$ 568,75</div><div class="c cm">R$ 568,75</div><div class="c cm">R$ 568,75</div></div>
</div>
<div id="gline"></div>
<div class="btn" id="bbtn"><svg class="ci3" viewBox="0 0 448 512"><path fill="#111" fill-rule="evenodd" d="M48 0h352a48 48 0 0 1 48 48v416a48 48 0 0 1-48 48H48a48 48 0 0 1-48-48V48A48 48 0 0 1 48 0zM76 64a12 12 0 0 0-12 12v108a12 12 0 0 0 12 12h296a12 12 0 0 0 12-12v-108a12 12 0 0 0-12-12zM76 256a12 12 0 0 0-12 12v40a12 12 0 0 0 12 12h40a12 12 0 0 0 12-12v-40a12 12 0 0 0-12-12zM76 384a12 12 0 0 0-12 12v40a12 12 0 0 0 12 12h40a12 12 0 0 0 12-12v-40a12 12 0 0 0-12-12zM204 256a12 12 0 0 0-12 12v40a12 12 0 0 0 12 12h40a12 12 0 0 0 12-12v-40a12 12 0 0 0-12-12zM204 384a12 12 0 0 0-12 12v40a12 12 0 0 0 12 12h40a12 12 0 0 0 12-12v-40a12 12 0 0 0-12-12zM332 256a12 12 0 0 0-12 12v168a12 12 0 0 0 12 12h40a12 12 0 0 0 12-12v-168a12 12 0 0 0-12-12z"/></svg>Recalcular Geral</div>
</body>
</html>
